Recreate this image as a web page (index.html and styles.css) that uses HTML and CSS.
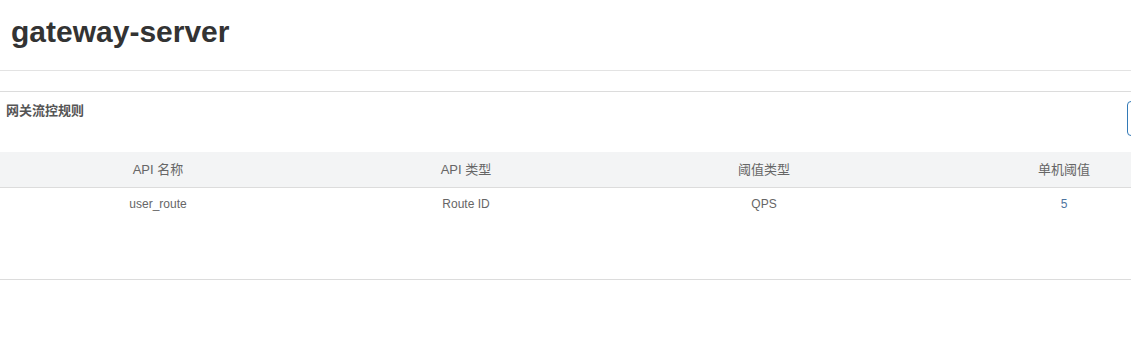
FILE: index.html
```html
<!DOCTYPE html>
<html lang="zh-CN">
	<head>
		<meta charset="UTF-8">
		<meta name="viewport" content="width=device-width, initial-scale=1.0">
		<title>gateway-server</title>
		<link rel="stylesheet" href="styles.css">
	</head>
	<body>
	<div class="page-head">
		<h1>gateway-server</h1>
	</div>
	<div class="panel">
		<div class="panel-head">
			<span class="panel-title">网关流控规则</span>
			<div class="btn-add" role="button"></div>
		</div>
		<table class="rules">
			<thead>
				<tr>
					<th class="col-1">API 名称</th>
					<th class="col-2">API 类型</th>
					<th class="col-3">阈值类型</th>
					<th class="col-4">单机阈值</th>
					<th></th>
				</tr>
			</thead>
			<tbody>
				<tr>
					<td>user_route</td>
					<td>Route ID</td>
					<td>QPS</td>
					<td class="num">5</td>
					<td></td>
				</tr>
			</tbody>
		</table>
	</div>
	</body>
</html>
```

FILE: styles.css
```css
body {
	margin: 0;
	font-family: 'Liberation Sans', Arial, 'Noto Sans CJK SC', sans-serif;
	color: #333;
	overflow-x: hidden;
}
.page-head {
	height: 71px;
	box-sizing: border-box;
	padding: 15px 11px 0;
	border-bottom: 1px solid #e3e3e3;
}
.page-head h1 {
	margin: 0;
	font-size: 30px;
	line-height: 33px;
	font-weight: bold;
	color: #333;
}
.panel {
	margin-top: 20px;
	width: 1240px;
	height: 187px;
	border-top: 1px solid #dcdcdc;
	border-bottom: 1px solid #dcdcdc;
}
.panel-head {
	display: flex;
	align-items: flex-start;
	height: 60px;
	box-sizing: border-box;
	padding: 9px 8px 0 6px;
}
.panel-title {
	font-size: 13px;
	line-height: 20px;
	font-weight: bold;
	color: #555;
}
.btn-add {
	margin-left: auto;
	width: 105px;
	height: 35px;
	box-sizing: border-box;
	border: 1px solid #337ab7;
	border-radius: 4px;
	background-color: #fff;
}
.rules {
	border-collapse: collapse;
	table-layout: fixed;
	width: 1240px;
}
.rules th {
	height: 35px;
	padding: 0;
	background-color: #f3f4f5;
	border-bottom: 1px solid #dcdcdc;
	font-size: 13px;
	line-height: 18px;
	font-weight: normal;
	color: #666;
	text-align: center;
}
.rules td {
	height: 32px;
	padding: 0;
	font-size: 12px;
	line-height: 16px;
	color: #666;
	text-align: center;
}
.rules .col-1 { width: 316px; }
.rules .col-2 { width: 300px; }
.rules .col-3 { width: 296px; }
.rules .col-4 { width: 304px; }
.rules td.num {
	color: #4f74a0;
}
```
